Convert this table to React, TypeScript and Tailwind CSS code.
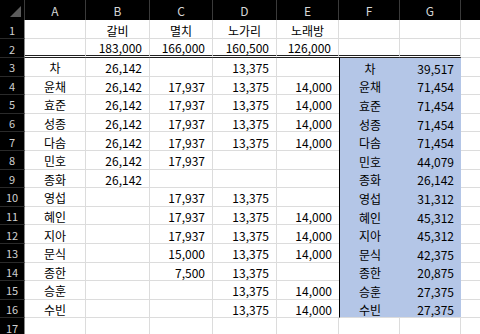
const COLS = ["A", "B", "C", "D", "E", "F", "G", ""];

type Row = string[];

// A, B, C, D, E, F, G
const ROWS: Row[] = [
  ["", "갈비", "멸치", "노가리", "노래방", "", ""],
  ["", "183,000", "166,000", "160,500", "126,000", "", ""],
  ["차", "26,142", "", "13,375", "", "차", "39,517"],
  ["윤채", "26,142", "17,937", "13,375", "14,000", "윤채", "71,454"],
  ["효준", "26,142", "17,937", "13,375", "14,000", "효준", "71,454"],
  ["성종", "26,142", "17,937", "13,375", "14,000", "성종", "71,454"],
  ["다솜", "26,142", "17,937", "13,375", "14,000", "다솜", "71,454"],
  ["민호", "26,142", "17,937", "", "", "민호", "44,079"],
  ["종화", "26,142", "", "", "", "종화", "26,142"],
  ["영섭", "", "17,937", "13,375", "", "영섭", "31,312"],
  ["혜인", "", "17,937", "13,375", "14,000", "혜인", "45,312"],
  ["지아", "", "17,937", "13,375", "14,000", "지아", "45,312"],
  ["문식", "", "15,000", "13,375", "14,000", "문식", "42,375"],
  ["종한", "", "7,500", "13,375", "", "종한", "20,875"],
  ["승훈", "", "", "13,375", "14,000", "승훈", "27,375"],
  ["수빈", "", "", "13,375", "14,000", "수빈", "27,375"],
  ["", "", "", "", "", "", ""],
];

function cellClass(r: number, c: number) {
  // r: 0-based data row (row 1 = 0), c: 0-based column (A = 0)
  const blue = r >= 2 && r <= 15 && (c === 5 || c === 6);
  const cls = ["flex items-center whitespace-nowrap leading-none"];
  cls.push(r === 0 ? "pt-[4px]" : r === 1 ? "pt-[1px]" : "pt-[3px]");
  const centered = c === 0 || c === 5 || r === 0;
  cls.push(centered ? "justify-center" : "justify-end pr-[7px]");
  if (blue) {
    cls.push("bg-[#b4c6e7]");
    if (c === 5) cls.push("border-l border-l-black");
  } else {
    cls.push("bg-white");
    if (!(c === 4 && r >= 2 && r <= 15)) cls.push("border-r border-r-[#dcdcdc]");
  }
  if (r === 1 && c <= 6) {
    cls.push("border-b-[3px] border-double border-b-[#202020]");
  } else if (!(blue && r < 15)) {
    cls.push("border-b border-b-[#dcdcdc]");
  }
  return cls.join(" ");
}

export default function App() {
  return (
    <div className="w-[480px] h-[334px] overflow-hidden bg-white font-['Noto_Sans_CJK_KR',sans-serif] text-[12px] text-black">
      <div className="grid grid-cols-[25px_61px_64px_63px_64px_62px_61px_61px_40px] grid-rows-[20px_19px_19px_repeat(15,18.6px)]">
        {/* corner */}
        <div className="relative bg-black border-r border-r-[#3a3a3a]">
          <div className="absolute right-[3px] bottom-[3px] w-0 h-0 border-l-[11px] border-l-transparent border-b-[11px] border-b-[#5c5c5c]" />
        </div>
        {COLS.map((l, i) => (
          <div
            key={"h" + i}
            className="flex items-center justify-center bg-black text-[#d6d6d6] text-[12px] leading-none pt-[1px] border-r border-r-[#3a3a3a]"
          >
            {l}
          </div>
        ))}
        {ROWS.map((row, r) => (
          <>
            <div
              key={"n" + r}
              className="flex items-center justify-center bg-black text-[#d0d0d0] text-[11px] leading-none pt-[2px] border-b border-b-[#2a2a2a] border-r border-r-[#8a8a8a]"
            >
              {r + 1}
            </div>
            {row.map((v, c) => (
              <div key={r + "-" + c} className={cellClass(r, c)}>
                {v}
              </div>
            ))}
            <div key={"x" + r} className="bg-white border-r border-r-[#dcdcdc] border-b border-b-[#dcdcdc]" />
          </>
        ))}
      </div>
    </div>
  );
}
